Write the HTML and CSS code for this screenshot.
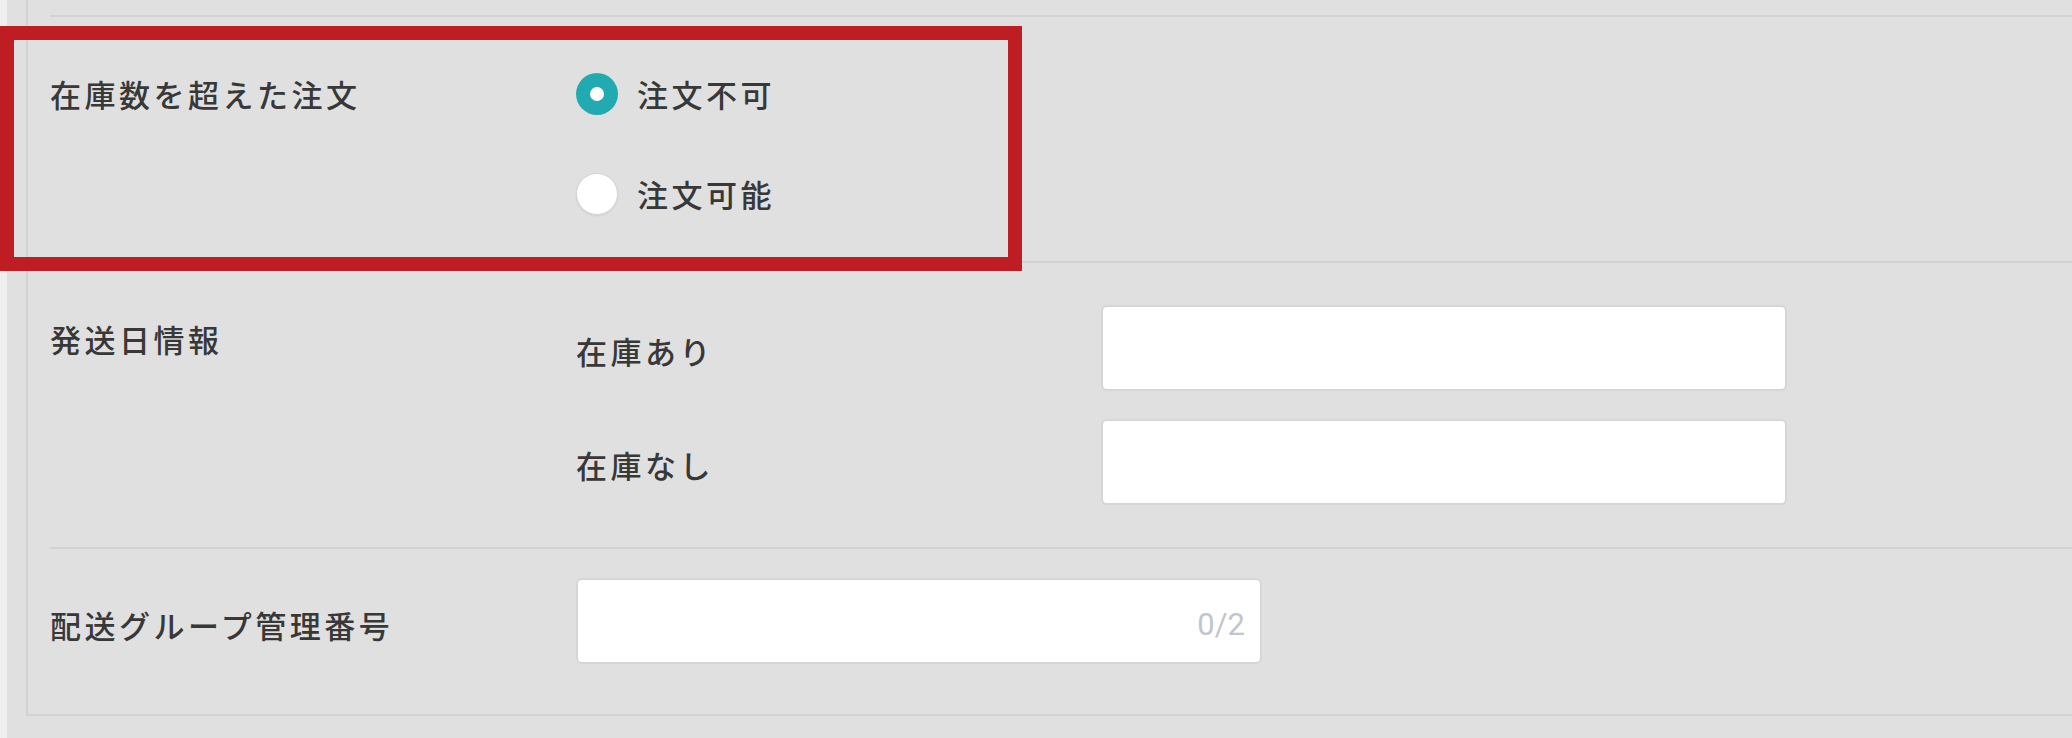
FILE: index.html
```html
<!DOCTYPE html>
<html lang="ja">
<head>
<meta charset="utf-8">
<title>在庫設定</title>
<link rel="stylesheet" href="styles.css">
</head>
<body>
<div class="page">
  <div class="edge"></div>
  <div class="card">
    <div class="row row-prev"></div>
    <div class="row row-stock">
      <div class="label">在庫数を超えた注文</div>
      <div class="options">
        <label class="option"><span class="radio checked"></span><span class="text">注文不可</span></label>
        <label class="option"><span class="radio"></span><span class="text">注文可能</span></label>
      </div>
    </div>
    <div class="row row-ship">
      <div class="label">発送日情報</div>
      <div class="sub">
        <div class="sub-row"><div class="sub-label">在庫あり</div><div class="input"></div></div>
        <div class="sub-row"><div class="sub-label">在庫なし</div><div class="input"></div></div>
      </div>
    </div>
    <div class="row row-group">
      <div class="label">配送グループ管理番号</div>
      <div class="input counter-input"><span class="counter">0/2</span></div>
    </div>
  </div>
  <div class="highlight"></div>
</div>
</body>
</html>
```
FILE: styles.css
```css
html, body {
  margin: 0;
  padding: 0;
}
body {
  background: #e0e0e0;
  width: 2072px;
  height: 738px;
  overflow: hidden;
  font-family: "Noto Sans CJK JP", "Noto Sans", sans-serif;
  font-weight: 500;
  color: #383838;
}
.page {
  position: relative;
  display: flex;
  height: 738px;
}
.edge {
  width: 7px;
  background: #efefef;
  flex: none;
}
.card {
  margin-left: 19px;
  flex: 1;
  height: 714px;
  border-left: 2px solid #d2d2d2;
  border-bottom: 2px solid #d2d2d2;
  padding-left: 22px;
  display: flex;
  flex-direction: column;
}
.row {
  display: flex;
  border-bottom: 2px solid #d2d2d2;
}
.row-prev {
  height: 15px;
}
.label {
  width: 526px;
  flex: none;
  font-size: 31px;
  line-height: 42px;
  letter-spacing: 3.5px;
  white-space: nowrap;
}
.row-stock {
  padding: 56px 0 46px;
}
.options {
  display: flex;
  flex-direction: column;
  gap: 58px;
}
.option {
  display: flex;
  align-items: center;
  height: 42px;
  gap: 19px;
}
.radio {
  width: 42px;
  height: 42px;
  border-radius: 50%;
  box-sizing: border-box;
  background: #fff;
  border: 1px solid #d4d4d4;
  box-shadow: 0 1px 2px rgba(0, 0, 0, 0.08);
  display: flex;
  align-items: center;
  justify-content: center;
}
.radio.checked {
  background: #21abb0;
  border: none;
  box-shadow: none;
}
.radio.checked::after {
  content: "";
  width: 14px;
  height: 14px;
  border-radius: 50%;
  background: #fff;
}
.text {
  font-size: 31px;
  letter-spacing: 3.5px;
  line-height: 42px;
}
.row-ship {
  padding: 42px 0 42px;
}
.row-ship .label {
  margin-top: 13px;
}
.sub {
  display: flex;
  flex-direction: column;
  gap: 28px;
}
.sub-row {
  display: flex;
  align-items: center;
}
.sub-label {
  width: 525px;
  font-size: 31px;
  letter-spacing: 3.5px;
  line-height: 42px;
  padding-top: 6px;
}
.input {
  width: 686px;
  height: 86px;
  box-sizing: border-box;
  background: #fff;
  border: 2px solid #d6d6d6;
  border-radius: 6px;
}
.row-group {
  border-bottom: none;
  padding: 29px 0 0;
  height: 166px;
  box-sizing: border-box;
  align-items: flex-start;
}
.row-group .label {
  margin-top: 26px;
}
.counter-input {
  display: flex;
  align-items: center;
  justify-content: flex-end;
  padding: 8px 15px 0 0;
}
.counter {
  font-family: Roboto, "Liberation Sans", sans-serif;
  font-weight: 400;
  font-size: 31px;
  color: #c2c5cd;
}
.highlight {
  position: absolute;
  left: 0;
  top: 26px;
  width: 1022px;
  height: 245px;
  box-sizing: border-box;
  border: 14px solid #be1e23;
}
```
